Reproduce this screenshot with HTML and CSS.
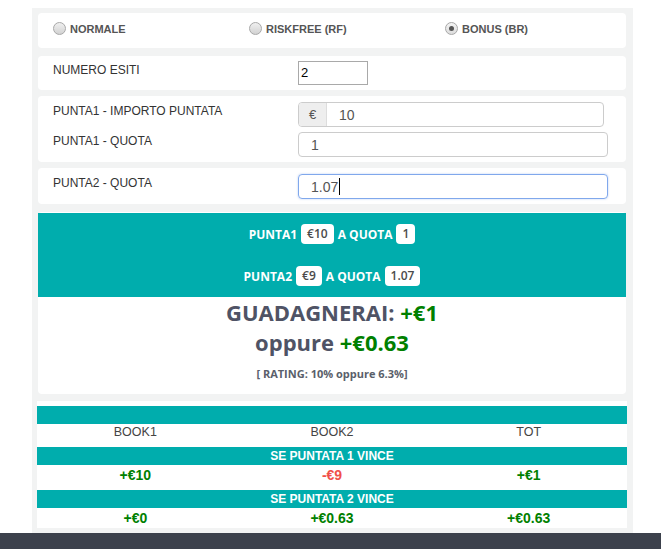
FILE: index.html
```html
<!DOCTYPE html>
<html lang="it">
<head>
<meta charset="utf-8">
<title>Calcolatore</title>
<link rel="stylesheet" href="styles.css">
</head>
<body>
<div class="page">
  <div class="card modes">
    <div class="mode"><span class="radio"></span>NORMALE</div>
    <div class="mode"><span class="radio"></span>RISKFREE (RF)</div>
    <div class="mode"><span class="radio checked"></span>BONUS (BR)</div>
  </div>

  <div class="card form esiti">
    <div class="row">
      <div class="label">NUMERO ESITI</div>
      <div class="plain-input">2</div>
    </div>
  </div>

  <div class="card form">
    <div class="row">
      <div class="label">PUNTA1 - IMPORTO PUNTATA</div>
      <div class="input-group"><span class="addon">€</span><span class="group-field">10</span></div>
    </div>
    <div class="row">
      <div class="label">PUNTA1 - QUOTA</div>
      <div class="field">1</div>
    </div>
  </div>

  <div class="card form">
    <div class="row">
      <div class="label">PUNTA2 - QUOTA</div>
      <div class="field focus">1.07<span class="caret"></span></div>
    </div>
  </div>

  <div class="card result">
    <div class="summary">
      <div class="bet">PUNTA1 <span class="badge">€10</span> A QUOTA <span class="badge">1</span></div>
      <div class="bet">PUNTA2 <span class="badge">€9</span> A QUOTA <span class="badge">1.07</span></div>
    </div>
    <div class="gain">GUADAGNERAI: <span class="pos">+€1</span></div>
    <div class="gain">oppure <span class="pos">+€0.63</span></div>
    <div class="rating">[ RATING: 10% oppure 6.3%]</div>
  </div>

  <div class="card outcome">
    <div class="band"></div>
    <div class="cols head"><span>BOOK1</span><span>BOOK2</span><span>TOT</span></div>
    <div class="band">SE PUNTATA 1 VINCE</div>
    <div class="cols vals first"><span class="pos">+€10</span><span class="neg">-€9</span><span class="pos">+€1</span></div>
    <div class="band">SE PUNTATA 2 VINCE</div>
    <div class="cols vals"><span class="pos">+€0</span><span class="pos">+€0.63</span><span class="pos">+€0.63</span></div>
  </div>
</div>
<div class="footer"></div>
</body>
</html>
```

FILE: styles.css
```css
html, body {
  margin: 0;
  padding: 0;
  background: #ffffff;
}

body {
  font-family: "Liberation Sans", Arial, sans-serif;
  color: #333333;
}

.page {
  margin: 8px 0 0 32px;
  width: 601px;
  box-sizing: border-box;
  background: #f2f3f3;
  padding: 5px 7px 5px 6px;
}

.card {
  background: #ffffff;
  border-radius: 4px;
}

/* mode radios */
.modes {
  height: 35px;
  box-sizing: border-box;
  padding-bottom: 4px;
  display: grid;
  grid-template-columns: repeat(3, 1fr);
  align-items: center;
}

.mode {
  display: flex;
  align-items: center;
  gap: 4px;
  padding-left: 15px;
  font-size: 11px;
  font-weight: bold;
  color: #555555;
}

.radio {
  width: 11px;
  height: 11px;
  border-radius: 50%;
  border: 1px solid #a8a8a8;
  background: linear-gradient(#f0f0f0, #d2d2d2);
  display: flex;
  align-items: center;
  justify-content: center;
}

.radio.checked {
  background: linear-gradient(#f4f4f4, #dcdcdc);
}

.radio.checked::after {
  content: "";
  width: 5px;
  height: 5px;
  border-radius: 50%;
  background: #555555;
}

/* form cards */
.form {
  margin-top: 6px;
  padding: 6px 0 5px;
  display: flex;
  flex-direction: column;
  gap: 5px;
}

.esiti {
  margin-top: 8px;
  padding: 5px 0;
}

.row {
  display: flex;
  align-items: flex-start;
}

.label {
  width: 245px;
  padding: 1px 0 0 15px;
  line-height: 17px;
  font-size: 12px;
  color: #333333;
}

.plain-input {
  width: 70px;
  height: 24px;
  box-sizing: border-box;
  border: 1px solid #a9a9a9;
  padding-left: 2px;
  font-size: 13px;
  line-height: 22px;
  color: #000000;
}

.field,
.input-group {
  height: 25px;
  box-sizing: border-box;
  border: 1px solid #cccccc;
  border-radius: 4px;
  font-size: 14px;
  color: #555555;
  display: flex;
  align-items: center;
}

.field {
  width: 310px;
  padding-left: 12px;
}

.field.focus {
  border-color: #80a8ec;
  box-shadow: 0 0 2px rgba(102, 150, 233, 0.5);
}

.caret {
  display: inline-block;
  width: 1px;
  height: 17px;
  background: #000000;
  margin-left: 1px;
}

.input-group {
  width: 306px;
  overflow: hidden;
}

.addon {
  width: 27px;
  height: 100%;
  background: #eeeeee;
  border-right: 1px solid #dddddd;
  display: flex;
  align-items: center;
  justify-content: center;
  font-size: 13px;
}

.group-field {
  padding-left: 12px;
}

/* result */
.result {
  margin-top: 8px;
  padding: 1px 0 13px;
  text-align: center;
  font-family: "Open Sans", "Liberation Sans", sans-serif;
}

.summary {
  background: #00adad;
}

.bet {
  height: 42px;
  display: flex;
  align-items: center;
  justify-content: center;
  gap: 4px;
  color: #ffffff;
  font-size: 12px;
  font-weight: bold;
}

.badge {
  display: inline-block;
  background: #ffffff;
  color: #4a4a4a;
  font-weight: 600;
  border-radius: 4px;
  padding: 0 6px;
  line-height: 20px;
}

.gain {
  font-size: 22px;
  font-weight: bold;
  line-height: 30px;
  color: #4f5365;
}

.pos {
  color: #008000;
}

.neg {
  color: #f0504a;
}

.rating {
  margin-top: 10px;
  font-size: 11px;
  font-weight: bold;
  line-height: 14px;
  color: #5a5f6b;
}

/* outcome table */
.outcome {
  margin: 7px -1px 0;
  border-radius: 0;
  padding-top: 5px;
}

.band {
  height: 18px;
  background: #00adad;
  color: #ffffff;
  font-size: 12px;
  font-weight: bold;
  line-height: 18px;
  text-align: center;
}

.cols {
  display: grid;
  grid-template-columns: repeat(3, 1fr);
  text-align: center;
}

.head {
  font-size: 12.5px;
  line-height: 17px;
  padding-bottom: 6px;
  color: #444444;
}

.vals {
  font-size: 14px;
  font-weight: bold;
  line-height: 20px;
}

.vals.first {
  padding-bottom: 5px;
}

.footer {
  height: 20px;
  background: #3c414c;
}
```
